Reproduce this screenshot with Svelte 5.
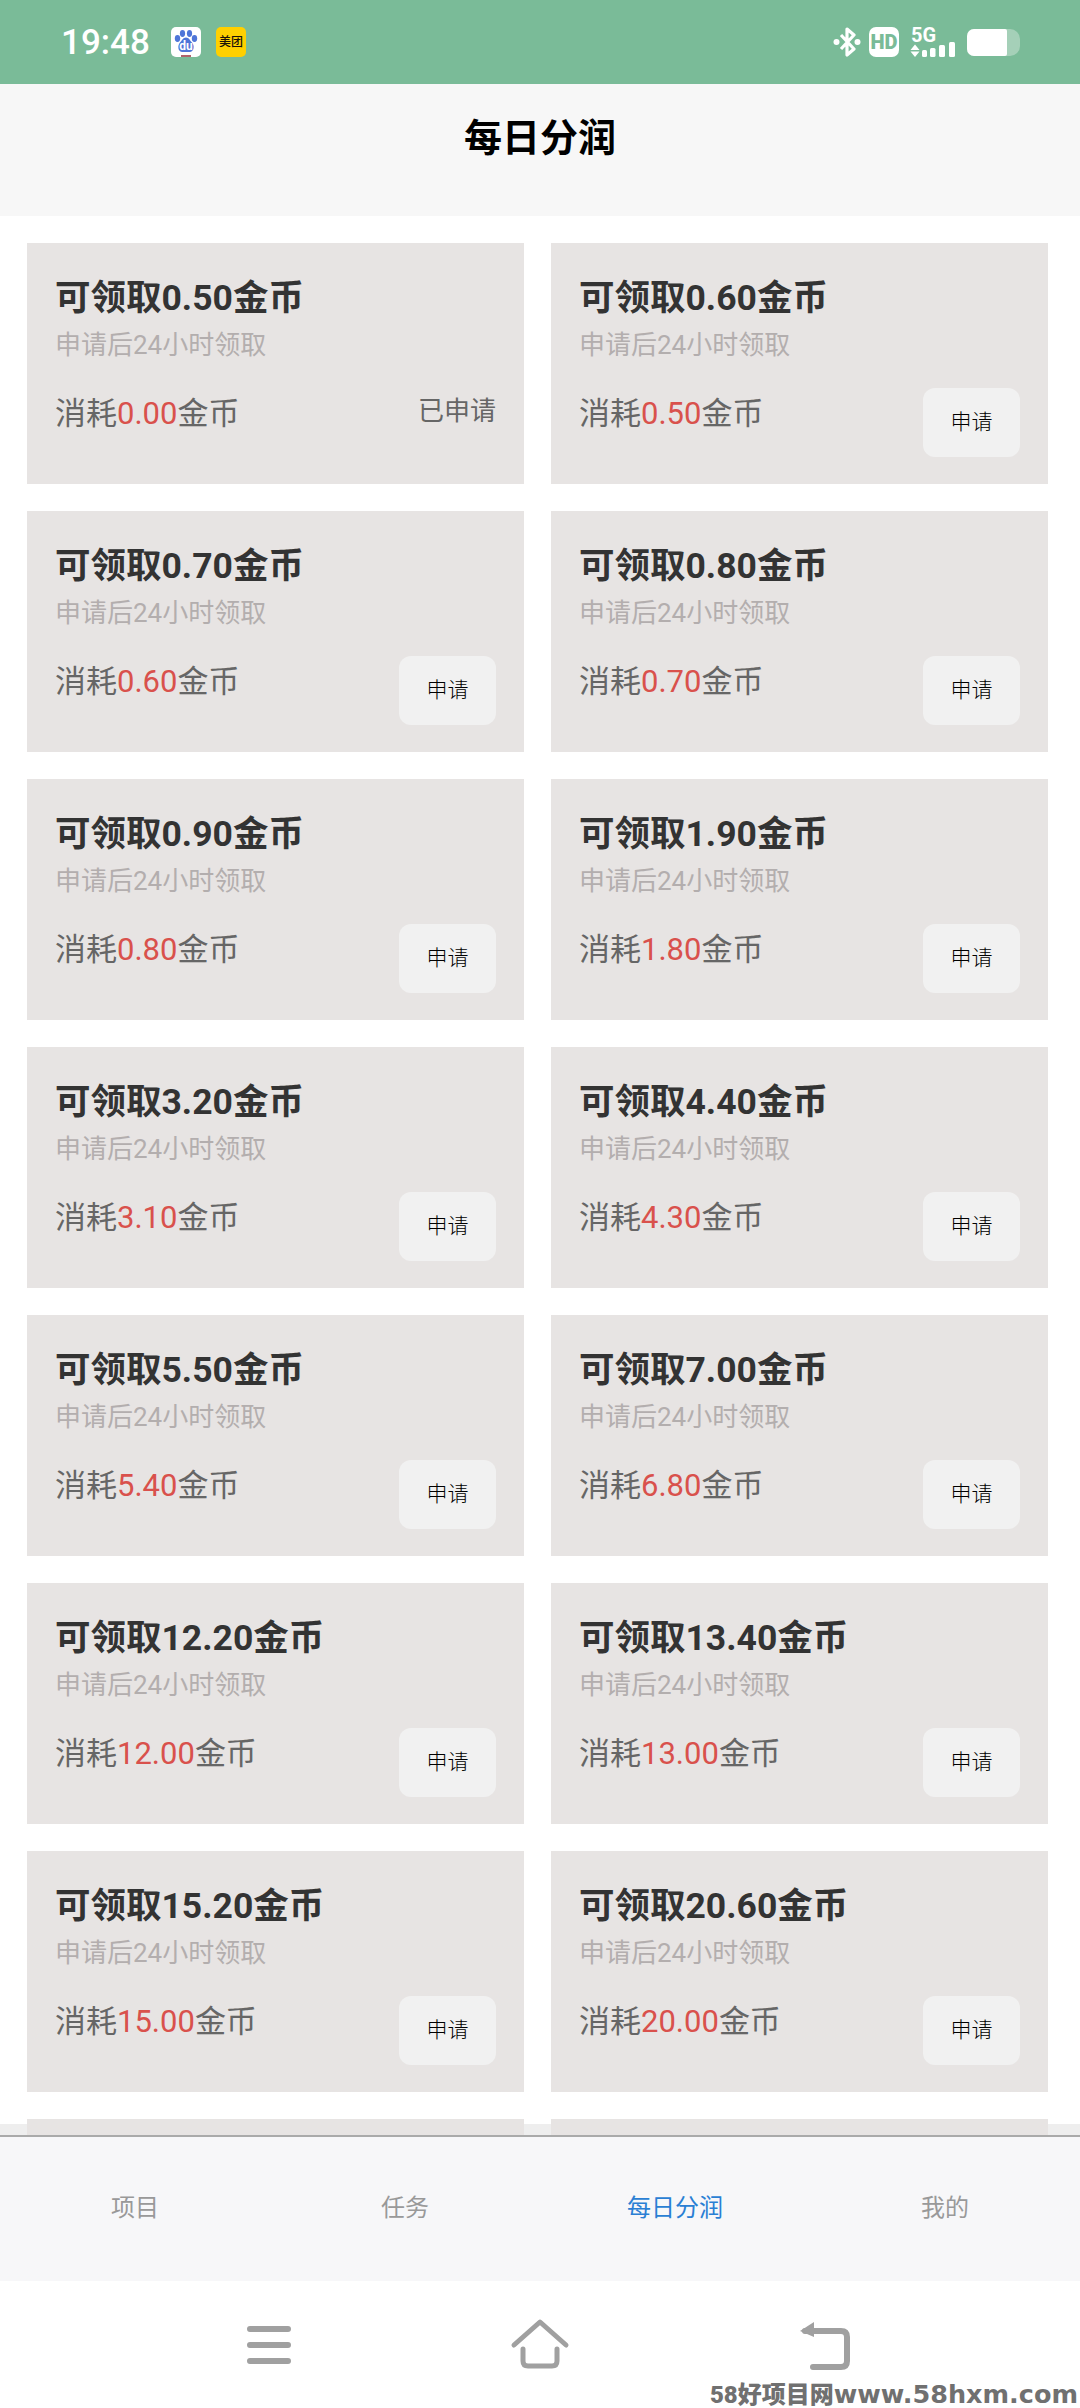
<script>
  // Amounts as shown on the page, the last row is cut off by the tab bar
  const offers = [
    { get: '0.50', cost: '0.00', applied: true },
    { get: '0.60', cost: '0.50' },
    { get: '0.70', cost: '0.60' },
    { get: '0.80', cost: '0.70' },
    { get: '0.90', cost: '0.80' },
    { get: '1.90', cost: '1.80' },
    { get: '3.20', cost: '3.10' },
    { get: '4.40', cost: '4.30' },
    { get: '5.50', cost: '5.40' },
    { get: '7.00', cost: '6.80' },
    { get: '12.20', cost: '12.00' },
    { get: '13.40', cost: '13.00' },
    { get: '15.20', cost: '15.00' },
    { get: '20.60', cost: '20.00' }
  ];
  const tabs = ['项目', '任务', '每日分润', '我的'];
</script>

<div class="page">
  <div class="status">
    <span class="time">19:48</span>
    <span class="app baidu">
      <svg viewBox="0 0 30 30" width="30" height="30">
        <g fill="#4e75d8">
          <ellipse cx="6.500" cy="11.500" rx="2.700" ry="3.400" />
          <ellipse cx="11.500" cy="6.500" rx="2.600" ry="3.400" />
          <ellipse cx="18.500" cy="6.500" rx="2.600" ry="3.400" />
          <ellipse cx="23.500" cy="11.500" rx="2.700" ry="3.400" />
          <path d="M15 10.500c-3 0-4 3-6 5-2.500 2.500-2.500 9.500 2.500 9.500h7c5 0 5-7 2.500-9.500-2-2-3-5-6-5z" />
        </g>
        <rect x="10" y="28" width="10" height="2" fill="#b0636a" />
      </svg>
      <span class="du">du</span>
    </span>
    <span class="app meituan">美团</span>
    <span class="spacer"></span>
    <svg class="bt" viewBox="0 0 28 30" width="28" height="30">
      <path d="M8 8l13 14-7 6V2l7 6L8 22" fill="none" stroke="#fff" stroke-width="3.200" stroke-linejoin="round" />
      <circle cx="3.500" cy="15" r="3" fill="#fff" />
      <circle cx="24.500" cy="15" r="3" fill="#fff" />
    </svg>
    <span class="hd">HD</span>
    <svg class="signal" viewBox="0 -6 47 36" width="47" height="36">
      <text x="1" y="15" font-size="20" font-weight="700" font-family="Roboto, sans-serif" fill="#fff">5G</text>
      <path d="M0.500 23l4.500-5.500 4.500 5.500zM0.500 24.500h9l-4.500 5.500z" fill="#fff" />
      <rect x="12" y="23" width="5" height="7" rx="1.500" fill="#fff" />
      <rect x="20" y="21" width="5.500" height="9" rx="1.500" fill="#fff" />
      <rect x="29" y="18" width="6" height="12" rx="1.500" fill="#fff" />
      <rect x="39" y="15" width="6" height="15" rx="1.500" fill="#fff" />
    </svg>
    <span class="battery"><span class="level"></span></span>
  </div>

  <header class="title-bar">每日分润</header>

  <main class="content">
    <div class="list">
      {#each offers as offer}
        <div class="card">
          <h2>可领取{offer.get}金币</h2>
          <p class="hint">申请后24小时领取</p>
          <div class="row">
            <span class="cost">消耗<em>{offer.cost}</em>金币</span>
            {#if offer.applied}
              <span class="applied">已申请</span>
            {:else}
              <span class="apply">申请</span>
            {/if}
          </div>
        </div>
      {/each}
      <div class="card"></div>
      <div class="card"></div>
    </div>
  </main>

  <nav class="tabs">
    {#each tabs as tab, i}
      <span class="tab" class:active={i === 2}>{tab}</span>
    {/each}
  </nav>

  <div class="sysnav">
    <svg viewBox="0 0 64 64" width="64" height="64">
      <g fill="none" stroke="#a0a0a0" stroke-width="6" stroke-linecap="round">
        <path d="M13 16h38M13 32h38M13 48h38" />
      </g>
    </svg>
    <svg viewBox="0 0 64 64" width="64" height="64">
      <g fill="none" stroke="#a0a0a0" stroke-width="5" stroke-linecap="round" stroke-linejoin="round">
        <path d="M6 32L32 9l26 23" />
        <path d="M15 36v12q0 5 5 5h24q5 0 5-5V36" />
      </g>
    </svg>
    <svg class="back" viewBox="0 0 64 64" width="64" height="64">
      <g fill="none" stroke="#a0a0a0" stroke-width="6" stroke-linecap="round" stroke-linejoin="round">
        <path d="M12 18h36q6 0 6 6v24q0 6-6 6H20" />
      </g>
      <path d="M7 18l14-9v15z" fill="#a0a0a0" />
    </svg>
  </div>

  <div class="watermark">58好项目网<span>www.58hxm.com</span></div>
</div>

<style>
  :global(body) {
    margin: 0;
    background: #fff;
  }

  .page {
    position: relative;
    width: 1080px;
    height: 2408px;
    overflow: hidden;
    display: flex;
    flex-direction: column;
    font-family: Roboto, "Noto Sans CJK SC", sans-serif;
  }

  .status {
    height: 84px;
    flex: none;
    background: #7abb98;
    display: flex;
    align-items: center;
    padding: 0 60px 0 61px;
    box-sizing: border-box;
  }

  .time {
    color: #fff;
    font-size: 35px;
    font-weight: 500;
    width: 110px;
  }

  .app {
    width: 30px;
    height: 30px;
    border-radius: 5px;
    position: relative;
    overflow: hidden;
    flex: none;
  }

  .baidu {
    background: #fff;
    margin-right: 15px;
  }

  .baidu svg {
    display: block;
  }

  .du {
    position: absolute;
    left: 0;
    right: 0;
    top: 13px;
    text-align: center;
    color: #fff;
    font-size: 12px;
    line-height: 12px;
    font-weight: 700;
  }

  .meituan {
    background: #ffd000;
    color: #1a1208;
    font-size: 12px;
    font-weight: 500;
    line-height: 30px;
    text-align: center;
  }

  .spacer {
    flex: 1;
  }

  .bt {
    margin-right: 8px;
  }

  .hd {
    width: 30px;
    height: 30px;
    border-radius: 7px;
    background: #fff;
    color: #7abb98;
    font-size: 20px;
    font-weight: 900;
    line-height: 30px;
    text-align: center;
    margin-right: 11px;
  }

  .signal {
    margin: -6px 10px 0 0;
  }

  .battery {
    width: 53px;
    height: 27px;
    border-radius: 7px 10px 10px 7px;
    background: #a5d0b8;
    display: block;
    flex: none;
  }

  .level {
    display: block;
    width: 40px;
    height: 27px;
    border-radius: 7px 2px 2px 7px;
    background: #fff;
  }

  .title-bar {
    height: 132px;
    flex: none;
    background: #f7f7f7;
    color: #000;
    font-size: 38px;
    font-weight: 700;
    text-align: center;
    line-height: 108px;
  }

  .content {
    flex: 1;
    min-height: 0;
    overflow: hidden;
    background: #eeeeee;
  }

  .list {
    height: 1908px;
    box-sizing: border-box;
    background: #fff;
    padding: 27px 32px 0 27px;
    display: grid;
    grid-template-columns: 497px 497px;
    grid-auto-rows: 241px;
    column-gap: 27px;
    row-gap: 27px;
  }

  .card {
    background: #e7e4e3;
    padding: 34px 28px 0 28px;
    box-sizing: border-box;
    height: 241px;
  }

  h2 {
    margin: 0;
    color: #333;
    font-size: 35.5px;
    font-weight: 700;
    line-height: 42px;
  }

  .hint {
    margin: 8px 0 0;
    color: #b3aeae;
    font-size: 26px;
    line-height: 36px;
  }

  .row {
    margin-top: 21px;
    display: flex;
    justify-content: space-between;
    align-items: flex-start;
  }

  .cost {
    color: #666;
    font-size: 31px;
    line-height: 42px;
    margin-top: 9px;
  }

  .cost em {
    font-style: normal;
    color: #d9514c;
  }

  .applied {
    color: #666;
    font-size: 26px;
    line-height: 36px;
    margin-top: 9px;
  }

  .apply {
    width: 97px;
    height: 69px;
    border-radius: 12px;
    background: #f1f1f1;
    color: #000;
    font-size: 21px;
    font-weight: 300;
    line-height: 69px;
    text-align: center;
    margin-top: 4px;
  }

  .tabs {
    height: 146px;
    flex: none;
    box-sizing: border-box;
    background: #f7f7f9;
    border-top: 2px solid #aaa;
    padding-bottom: 8px;
    display: grid;
    grid-template-columns: repeat(4, 1fr);
    align-items: center;
  }

  .tab {
    text-align: center;
    color: #999;
    font-size: 24px;
  }

  .tab.active {
    color: #2a7fd4;
  }

  .sysnav {
    height: 127px;
    flex: none;
    background: #fff;
    display: flex;
    align-items: center;
    padding: 0 0 0 237px;
    box-sizing: border-box;
    gap: 207px;
  }

  .back {
    margin-left: 14px;
  }

  .watermark {
    position: absolute;
    right: 2px;
    bottom: -2px;
    color: #707070;
    font-size: 24px;
    font-weight: 900;
    line-height: 30px;
    white-space: nowrap;
  }

  .watermark span {
    font-family: "DejaVu Sans", sans-serif;
    font-size: 25.5px;
    font-weight: 700;
  }
</style>
